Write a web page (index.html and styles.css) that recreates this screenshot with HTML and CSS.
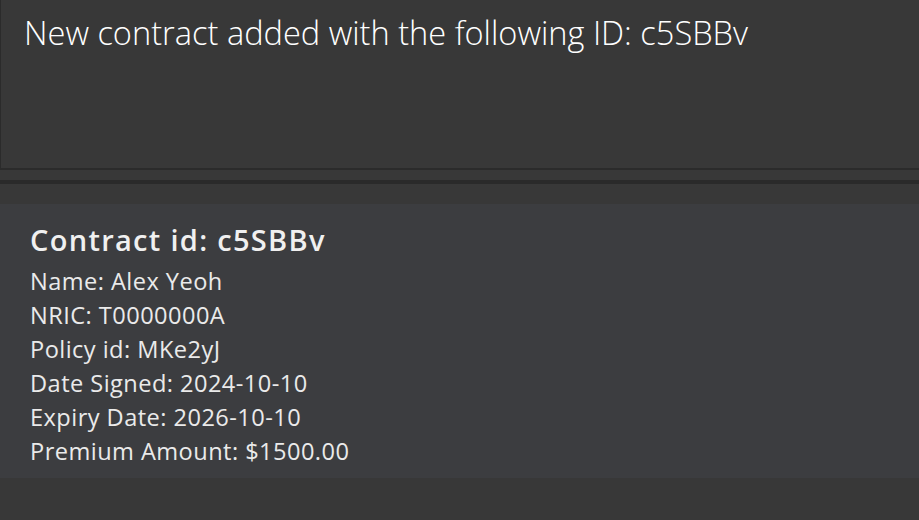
FILE: index.html
```html
<!DOCTYPE html>
<html>
<head>
<meta charset="utf-8">
<link rel="stylesheet" href="styles.css">
</head>
<body>
<div class="result">
  <div class="result-text">New contract added with the following ID: c5SBBv</div>
</div>
<div class="splitter"><div class="splitter-line"></div></div>
<div class="card">
  <div class="card-title">Contract id: c5SBBv</div>
  <div class="card-line">Name: Alex Yeoh</div>
  <div class="card-line">NRIC: T0000000A</div>
  <div class="card-line">Policy id: MKe2yJ</div>
  <div class="card-line">Date Signed: 2024-10-10</div>
  <div class="card-line">Expiry Date: 2026-10-10</div>
  <div class="card-line">Premium Amount: $1500.00</div>
</div>
</body>
</html>
```
FILE: styles.css
```css
html, body {
  margin: 0;
  padding: 0;
  background: #383838;
  height: 100%;
}
body {
  font-family: "Open Sans", "Noto Sans", sans-serif;
  overflow: hidden;
}
.result {
  box-sizing: border-box;
  height: 170px;
  border-left: 1px solid #2b2b2b;
  border-bottom: 2px solid #2b2b2b;
  padding: 11px 0 0 23px;
}
.result-text {
  font-weight: 300;
  font-size: 32.6px;
  line-height: 44px;
  color: #ffffff;
}
.splitter {
  padding: 10px 0 20px;
}
.splitter-line {
  height: 4px;
  background: #2a2a2a;
}
.card {
  background: #3c3d40;
  height: 274px;
  box-sizing: border-box;
  padding: 12px 30px 0;
  color: #eaeaea;
}
.card-title {
  font-weight: 600;
  font-size: 29px;
  line-height: 48px;
  letter-spacing: 1.3px;
  color: #f0f0f0;
}
.card-line {
  font-size: 23.6px;
  line-height: 34px;
  letter-spacing: 0.45px;
}
```
